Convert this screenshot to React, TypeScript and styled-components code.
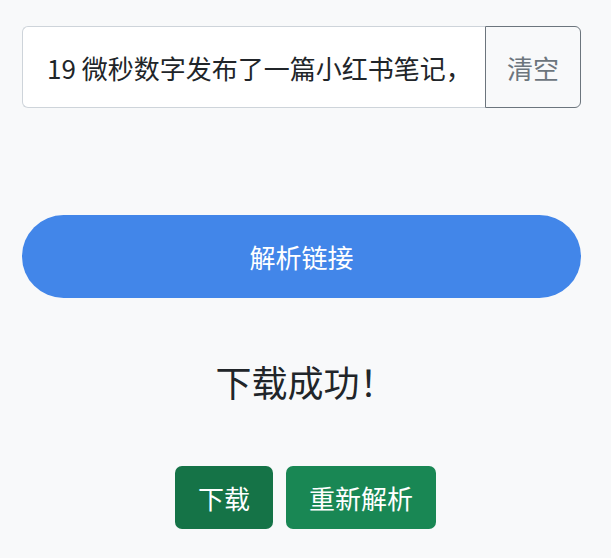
import styled, { createGlobalStyle } from 'styled-components';

const GlobalStyle = createGlobalStyle`
  html, body {
    margin: 0;
    padding: 0;
    background-color: #f8f9fa;
  }
  body {
    font-family: "Noto Sans CJK SC", "Noto Sans", sans-serif;
    color: #212529;
  }
`;

const Page = styled.div`
  min-height: 558px;
  padding: 26px 30px 0 22px;
  box-sizing: border-box;
  display: flex;
  flex-direction: column;
`;

const InputGroup = styled.div`
  display: flex;
  height: 82px;
`;

const LinkInput = styled.input`
  flex: 1;
  min-width: 0;
  box-sizing: border-box;
  height: 100%;
  padding: 0 18px 0 24px;
  font-family: inherit;
  font-size: 26px;
  color: #212529;
  background-color: #fff;
  border: 1px solid #ced4da;
  border-right: none;
  border-radius: 6px 0 0 6px;
  outline: none;
`;

const ClearButton = styled.button`
  width: 96px;
  height: 100%;
  font-family: inherit;
  font-size: 26px;
  color: #6c757d;
  background-color: #f8f9fa;
  border: 1.5px solid #6c757d;
  border-radius: 0 6px 6px 0;
  cursor: pointer;
`;

const ParseButton = styled.button`
  margin-top: 107px;
  height: 83px;
  width: 100%;
  font-family: inherit;
  font-size: 26px;
  color: #fff;
  background-color: #4286e9;
  border: none;
  border-radius: 42px;
  cursor: pointer;
`;

const Status = styled.h3`
  margin: 62px 0 0;
  padding-left: 8px;
  font-size: 36px;
  font-weight: 400;
  line-height: 1.2;
  text-align: center;
  color: #212529;
`;

const ActionRow = styled.div`
  display: flex;
  justify-content: center;
  gap: 13px;
  margin-top: 63px;
  padding-left: 8px;
`;

const ActionButton = styled.button<{ $active?: boolean }>`
  height: 63px;
  padding: 0 23px;
  font-family: inherit;
  font-size: 26px;
  color: #fff;
  background-color: ${({ $active }) => ($active ? '#157347' : '#198754')};
  border: none;
  border-radius: 7px;
  cursor: pointer;
`;

export default function App()
{
  return (
    <>
      <GlobalStyle />
      <Page>
        <InputGroup>
          <LinkInput defaultValue="19 微秒数字发布了一篇小红书笔记，快来看吧！" readOnly />
          <ClearButton>清空</ClearButton>
        </InputGroup>
        <ParseButton>解析链接</ParseButton>
        <Status>下载成功！</Status>
        <ActionRow>
          <ActionButton $active>下载</ActionButton>
          <ActionButton>重新解析</ActionButton>
        </ActionRow>
      </Page>
    </>
  );
}
